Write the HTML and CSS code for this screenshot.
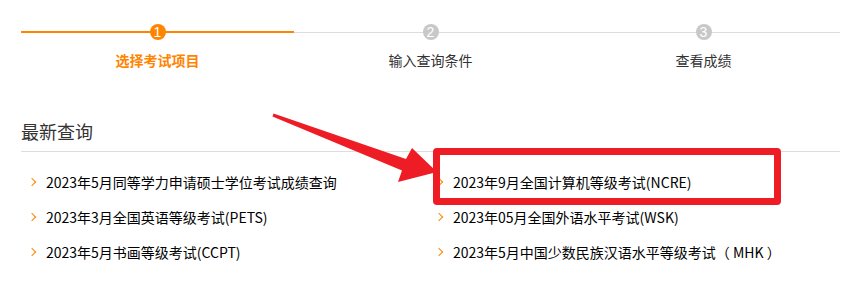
FILE: index.html
```html
<!DOCTYPE html>
<html lang="zh-CN">
<head>
  <meta charset="UTF-8">
  <title>成绩查询</title>
  <link rel="stylesheet" href="styles.css">
</head>
<body>
  <div class="page">
    <div class="steps">
      <div class="step active">
        <span class="num">1</span>
        <div class="label">选择考试项目</div>
      </div>
      <div class="step">
        <span class="num">2</span>
        <div class="label">输入查询条件</div>
      </div>
      <div class="step">
        <span class="num">3</span>
        <div class="label">查看成绩</div>
      </div>
    </div>

    <h2 class="title">最新查询</h2>

    <ul class="list">
      <li><a href="#">2023年5月同等学力申请硕士学位考试成绩查询</a></li>
      <li class="right"><a href="#">2023年9月全国计算机等级考试(NCRE)</a></li>
      <li><a href="#">2023年3月全国英语等级考试(PETS)</a></li>
      <li class="right"><a href="#">2023年05月全国外语水平考试(WSK)</a></li>
      <li><a href="#">2023年5月书画等级考试(CCPT)</a></li>
      <li class="right"><a href="#">2023年5月中国少数民族汉语水平等级考试（ MHK ）</a></li>
    </ul>
  </div>

  <!-- annotation drawn over the page -->
  <div class="mark-box"></div>
  <svg class="mark-arrow" width="849" height="295" viewBox="0 0 849 295">
    <polygon fill="#ee1d25" points="273.5,113.6 406,159 412,148 437,172 398,182 402,170.5 272.5,116.4"/>
  </svg>
</body>
</html>
```

FILE: styles.css
```css
body {
  margin: 0;
  font-family: "Microsoft YaHei", "Noto Sans CJK SC", "Noto Sans", sans-serif;
  background: #fff;
  color: #333;
}

.page {
  padding: 24px 9px 0 21px;
}

/* steps */
.steps {
  display: grid;
  grid-template-columns: repeat(3, 1fr);
}

.step {
  position: relative;
  text-align: center;
}

.step::before {
  content: "";
  position: absolute;
  left: 0;
  right: 0;
  top: 8px;
  border-top: 1px solid #dcdcdc;
}

.step.active::before {
  top: 7px;
  border-top: 2px solid #ff8400;
}

.num {
  position: relative;
  display: block;
  margin: 0 auto;
  width: 16px;
  height: 16px;
  line-height: 16px;
  border-radius: 50%;
  background: #c8c8c8;
  color: #fff;
  font-family: "Liberation Sans", Arial, sans-serif;
  font-size: 14px;
}

.step.active .num {
  background: #ff8400;
}

.label {
  margin-top: 10px;
  font-size: 14px;
  line-height: 20px;
  color: #333;
}

.step.active .label {
  color: #ff8400;
  font-weight: bold;
}

/* latest */
.title {
  margin: 49px 0 0;
  padding-bottom: 8px;
  border-bottom: 1px solid #ddd;
  font-size: 18px;
  line-height: 24px;
  font-weight: normal;
  color: #333;
}

.list {
  list-style: none;
  margin: 13px 0 0;
  padding: 0;
  display: grid;
  grid-template-columns: 406px 1fr;
}

.list li {
  position: relative;
  padding-left: 25px;
  line-height: 35px;
  font-size: 14px;
}

.list li.right {
  padding-left: 26px;
}

.list li::before {
  content: "";
  position: absolute;
  left: 8px;
  top: 14px;
  width: 5px;
  height: 5px;
  border-top: 1px solid #ff8400;
  border-right: 1px solid #ff8400;
  transform: rotate(45deg);
}

.list li.right::before {
  left: 9px;
}

.list a {
  color: #000;
  text-decoration: none;
}

/* red annotation */
.mark-box {
  position: absolute;
  left: 433px;
  top: 148px;
  width: 334px;
  height: 43px;
  border: 7px solid #ee1d25;
  border-radius: 4px;
}

.mark-arrow {
  position: absolute;
  left: 0;
  top: 0;
}
```
